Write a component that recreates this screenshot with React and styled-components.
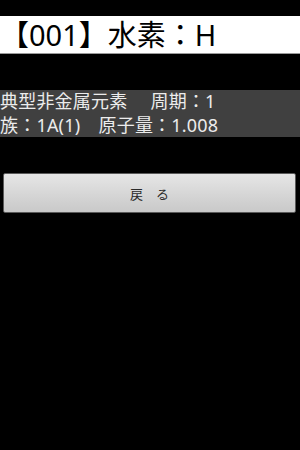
import React from "react";
import styled, { createGlobalStyle } from "styled-components";

const GlobalStyle = createGlobalStyle`
  html, body {
    margin: 0;
    padding: 0;
    background: #000000;
  }
  body {
    font-family: "Noto Sans", "Noto Sans CJK JP", sans-serif;
  }
`;

const Screen = styled.div`
  width: 300px;
  height: 450px;
  background: #000000;
  display: flex;
  flex-direction: column;
  padding-top: 16px;
  box-sizing: border-box;
`;

const TitleBar = styled.h1`
  margin: 0;
  height: 37px;
  background: #ffffff;
  border-bottom: 1px solid #9a9a9a;
  color: #000000;
  font-size: 29px;
  font-weight: normal;
  line-height: 37px;
  white-space: nowrap;
  overflow: hidden;
`;

const InfoBlock = styled.div`
  margin-top: 36px;
  background: #404040;
  color: #ececec;
  font-size: 18px;
  line-height: 23.5px;
  letter-spacing: 0.2px;
`;

const InfoLine = styled.div`
  white-space: pre;
`;

const BackButton = styled.button`
  margin: 36px 4px 0 3px;
  height: 40px;
  border: 1px solid #5a5a5a;
  border-radius: 2px;
  background: linear-gradient(to bottom, #e6e6e6 0%, #d4d4d4 60%, #c9c9c9 100%);
  color: #2a2a2a;
  font-family: "Noto Sans CJK JP", sans-serif;
  font-size: 13px;
  cursor: pointer;
`;

const App = () => {
  return (
    <>
      <GlobalStyle />
      <Screen>
        <TitleBar>【001】水素：H</TitleBar>
        <InfoBlock>
          <InfoLine>典型非金属元素　 周期：1</InfoLine>
          <InfoLine>族：1A(1)　原子量：1.008</InfoLine>
        </InfoBlock>
        <BackButton>戻　る</BackButton>
      </Screen>
    </>
  );
};

export default App;
